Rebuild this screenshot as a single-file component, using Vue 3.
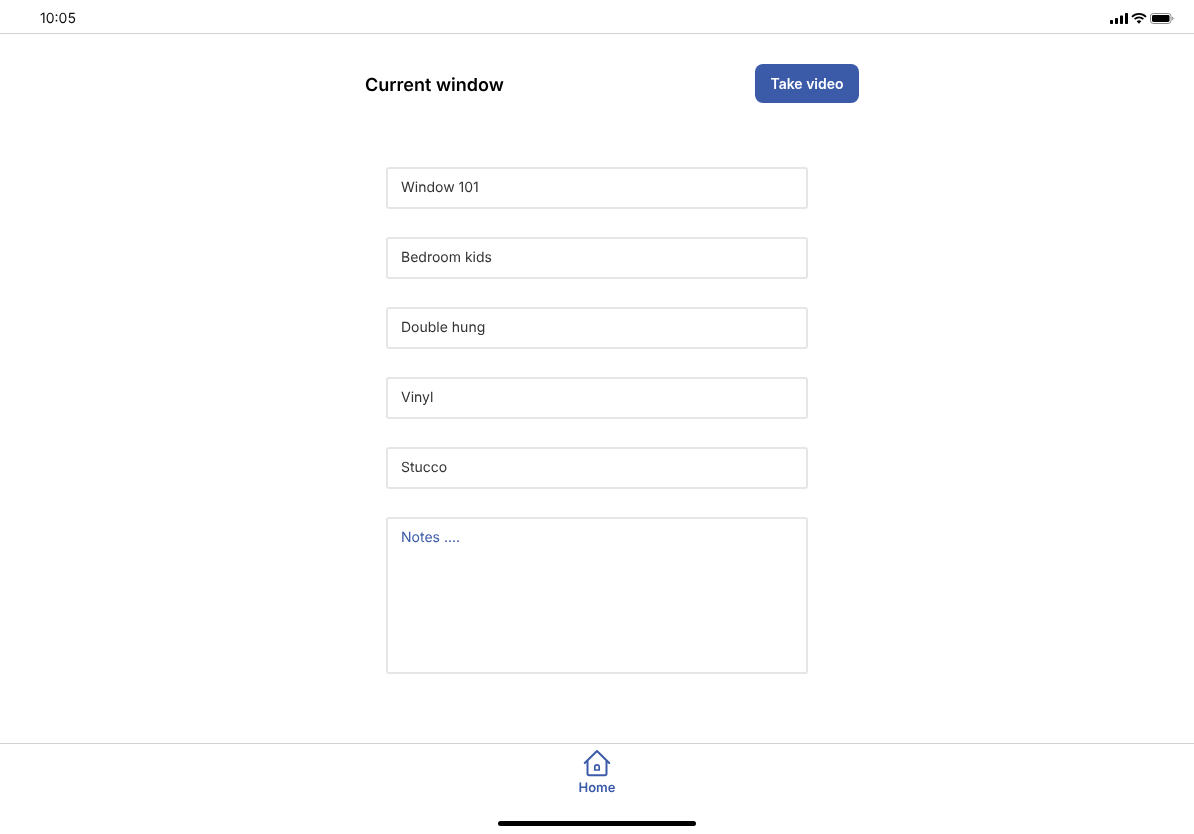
<template>
  <div class="screen">
    <header class="status-bar">
      <span class="time">10:05</span>
      <div class="status-icons">
        <svg width="18" height="11" viewBox="0 0 18 11">
          <rect x="0" y="7" width="3" height="4" rx="0.7" fill="#000" />
          <rect x="5" y="5" width="3" height="6" rx="0.7" fill="#000" />
          <rect x="10" y="2.5" width="3" height="8.5" rx="0.7" fill="#000" />
          <rect x="15" y="0" width="3" height="11" rx="0.7" fill="#000" />
        </svg>
        <svg width="16" height="11" viewBox="0 0 16 11">
          <path d="M1 3.8 A10 10 0 0 1 15 3.8" fill="none" stroke="#000" stroke-width="1.8" />
          <path d="M3.6 6.2 A6.4 6.4 0 0 1 12.4 6.2" fill="none" stroke="#000" stroke-width="1.8" />
          <path d="M5.7 8.3 A3.3 3.3 0 0 1 10.3 8.3 L8 10.8 Z" fill="#000" />
        </svg>
        <svg width="24" height="11" viewBox="0 0 24 11">
          <rect x="0.5" y="0.5" width="20.5" height="10" rx="2.8" fill="none" stroke="#8a8a8a" />
          <rect x="2" y="2" width="17.5" height="7" rx="1.4" fill="#000" />
          <path d="M22.2 3.8 C23.2 4.1 23.6 4.7 23.6 5.5 C23.6 6.3 23.2 6.9 22.2 7.2 Z" fill="#8a8a8a" />
        </svg>
      </div>
    </header>

    <main class="content">
      <div class="title-row">
        <h1>Current window</h1>
        <button class="take-video">Take video</button>
      </div>
      <form class="fields">
        <div v-for="field in fields" :key="field" class="field">{{ field }}</div>
        <div class="field notes">Notes ....</div>
      </form>
    </main>

    <footer class="tab-bar">
      <div class="tab">
        <svg width="28" height="27" viewBox="0 0 28 27" fill="none" stroke="#3b5ba9" stroke-width="2">
          <path d="M1.8 13 L14 1 L26.2 13" stroke-linecap="round" stroke-linejoin="round" />
          <path d="M4.5 11 V23.6 A1.6 1.6 0 0 0 6.1 25.2 H21.9 A1.6 1.6 0 0 0 23.5 23.6 V11" />
          <path d="M11.8 20 V17 A2.2 2.2 0 0 1 16.2 17 V20 Z" stroke-width="1.7" />
        </svg>
        <span>Home</span>
      </div>
      <div class="home-indicator"></div>
    </footer>
  </div>
</template>

<script setup>
const fields = ['Window 101', 'Bedroom kids', 'Double hung', 'Vinyl', 'Stucco'];
</script>

<style>
html, body {
  background: #fff;
}
</style>

<style scoped>
.screen {
  width: 1194px;
  height: 834px;
  display: flex;
  flex-direction: column;
  font-family: Inter, "Liberation Sans", sans-serif;
  text-rendering: geometricPrecision;
  will-change: transform;
  overflow: hidden;
}

.status-bar {
  height: 33px;
  border-bottom: 1px solid #d2d2d2;
  display: flex;
  justify-content: space-between;
  align-items: center;
  padding: 0 20px 0 40px;
  box-sizing: content-box;
}

.time {
  margin-top: 4px;
  font-size: 14px;
  color: #111;
}

.status-icons {
  display: flex;
  align-items: center;
  gap: 3px;
  padding-top: 3px;
}

.content {
  flex: 1;
  display: flex;
  flex-direction: column;
  align-items: center;
}

.title-row {
  width: 494px;
  margin: 30px 0 0 30px;
  height: 39px;
  display: flex;
  justify-content: space-between;
  align-items: center;
}

h1 {
  margin: 4px 0 0;
  font-size: 18px;
  font-weight: 600;
  color: #000;
}

.take-video {
  width: 104px;
  height: 39px;
  border: none;
  border-radius: 8px;
  background: #3b5ba9;
  color: #fff;
  font-family: inherit;
  font-size: 14px;
  font-weight: 600;
  padding: 0;
}

.fields {
  margin-top: 64px;
  width: 422px;
  display: flex;
  flex-direction: column;
  gap: 28px;
}

.field {
  height: 42px;
  box-sizing: border-box;
  border: 2px solid #e6e6e6;
  border-radius: 3px;
  padding: 0 13px 2px;
  display: flex;
  align-items: center;
  font-size: 14px;
  color: #333;
}

.notes {
  height: 157px;
  align-items: flex-start;
  padding-top: 10px;
  color: #3b5ba9;
}

.tab-bar {
  height: 90px;
  border-top: 1px solid #d2d2d2;
  display: flex;
  flex-direction: column;
  align-items: center;
  box-sizing: content-box;
}

.tab {
  margin-top: 6px;
  display: flex;
  flex-direction: column;
  align-items: center;
  gap: 3px;
  color: #3b5ba9;
  font-size: 13px;
  font-weight: 600;
}

.tab svg {
  display: block;
}

.home-indicator {
  margin-top: 25px;
  width: 198px;
  height: 5px;
  border-radius: 3px;
  background: #000;
}
</style>
